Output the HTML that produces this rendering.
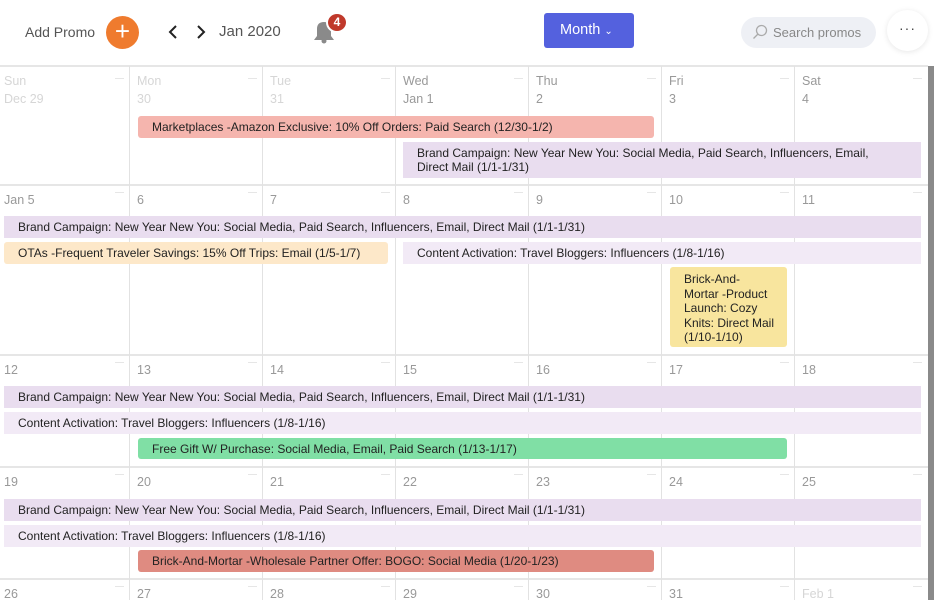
<!DOCTYPE html>
<html><head><meta charset="utf-8"><style>
*{box-sizing:border-box;margin:0;padding:0}
body{width:934px;height:600px;overflow:hidden;background:#fff;font-family:"Liberation Sans",sans-serif;position:relative;color:#222}
.a{position:absolute}
.vl{position:absolute;top:66px;bottom:0;width:1px;background:#e2e2e2}
.hl{position:absolute;left:0;width:928px;height:2px;background:#e6e6e6}
.d{position:absolute;font-size:12.5px;color:#999;line-height:18px}
.dim{color:#d6d6d6}
.dash{position:absolute;width:9px;height:1px;background:#e6e6e6}
.ev{position:absolute;font-size:12px;line-height:14px;color:#222;padding-left:14px;border-radius:3px;display:flex;align-items:center;white-space:nowrap}
</style></head><body>
<!-- header -->
<div class="a" style="left:25px;top:24px;font-size:14px;color:#555">Add Promo</div>
<div class="a" style="left:106px;top:16px;width:33px;height:33px;border-radius:50%;background:#ef7b2e;color:#fff;font-size:26px;line-height:31px;text-align:center;font-weight:300">+</div>
<svg class="a" style="left:166px;top:24px" width="44" height="16"><path d="M10 2 L4 8 L10 14" stroke="#222" stroke-width="2" fill="none"/><path d="M32 2 L38 8 L32 14" stroke="#222" stroke-width="2" fill="none"/></svg>
<div class="a" style="left:219px;top:23px;font-size:15px;color:#555">Jan 2020</div>
<svg class="a" style="left:311px;top:18px" width="26" height="26"><path d="M3 22 L6 18 L6 11 Q6 4 13 4 Q20 4 20 11 L20 18 L23 22 Z" fill="#8a8a8a"/><circle cx="13" cy="23" r="2.5" fill="#8a8a8a"/></svg>
<div class="a" style="left:326px;top:12px;width:22px;height:21px;border-radius:50%;background:#c0392b;border:2px solid #fff;color:#fff;font-size:12px;font-weight:bold;text-align:center;line-height:17px">4</div>
<div class="a" style="left:544px;top:13px;width:90px;height:35px;background:#5461de;border-radius:3px;color:#fff;font-size:14.5px;line-height:34px;padding-left:16px">Month <span style="font-size:10px">&#8964;</span></div>
<div class="a" style="left:741px;top:17px;width:135px;height:31px;background:#eef0f5;border-radius:16px;font-size:13px;color:#888;line-height:31px;padding-left:32px">Search promos</div>
<svg class="a" style="left:752px;top:24px" width="16" height="16"><circle cx="9.5" cy="6.5" r="5" stroke="#aaa" stroke-width="1.3" fill="none"/><path d="M6 10 L1.5 14.5" stroke="#aaa" stroke-width="1.3"/></svg>
<div class="a" style="left:887px;top:10px;width:41px;height:41px;border-radius:50%;background:#fff;box-shadow:0 1px 6px rgba(0,0,0,.1);text-align:center;font-size:14px;line-height:36px;color:#444;letter-spacing:1px">&middot;&middot;&middot;</div>
<!-- grid -->
<div class="hl" style="top:65px"></div>
<div class="hl" style="top:184px"></div>
<div class="hl" style="top:354px"></div>
<div class="hl" style="top:466px"></div>
<div class="hl" style="top:578px"></div>
<div class="vl" style="left:129px"></div><div class="vl" style="left:262px"></div><div class="vl" style="left:395px"></div><div class="vl" style="left:528px"></div><div class="vl" style="left:661px"></div><div class="vl" style="left:794px"></div>
<div class="a" style="left:928px;top:66px;width:6px;height:534px;background:#8a8a8a"></div>
<!-- row1 labels -->
<div class="d dim" style="left:4px;top:72px">Sun<br>Dec 29</div>
<div class="d dim" style="left:137px;top:72px">Mon<br>30</div>
<div class="d dim" style="left:270px;top:72px">Tue<br>31</div>
<div class="d" style="left:403px;top:72px">Wed<br>Jan 1</div>
<div class="d" style="left:536px;top:72px">Thu<br>2</div>
<div class="d" style="left:669px;top:72px">Fri<br>3</div>
<div class="d" style="left:802px;top:72px">Sat<br>4</div>
<!-- row2 -->
<div class="d" style="left:4px;top:191px">Jan 5</div><div class="d" style="left:137px;top:191px">6</div><div class="d" style="left:270px;top:191px">7</div><div class="d" style="left:403px;top:191px">8</div><div class="d" style="left:536px;top:191px">9</div><div class="d" style="left:669px;top:191px">10</div><div class="d" style="left:802px;top:191px">11</div>
<div class="d" style="left:4px;top:361px">12</div><div class="d" style="left:137px;top:361px">13</div><div class="d" style="left:270px;top:361px">14</div><div class="d" style="left:403px;top:361px">15</div><div class="d" style="left:536px;top:361px">16</div><div class="d" style="left:669px;top:361px">17</div><div class="d" style="left:802px;top:361px">18</div>
<div class="d" style="left:4px;top:473px">19</div><div class="d" style="left:137px;top:473px">20</div><div class="d" style="left:270px;top:473px">21</div><div class="d" style="left:403px;top:473px">22</div><div class="d" style="left:536px;top:473px">23</div><div class="d" style="left:669px;top:473px">24</div><div class="d" style="left:802px;top:473px">25</div>
<div class="d" style="left:4px;top:585px">26</div><div class="d" style="left:137px;top:585px">27</div><div class="d" style="left:270px;top:585px">28</div><div class="d" style="left:403px;top:585px">29</div><div class="d" style="left:536px;top:585px">30</div><div class="d" style="left:669px;top:585px">31</div><div class="d dim" style="left:802px;top:585px">Feb 1</div>
<!-- dashes -->
<div class="dash" style="left:115px;top:78px"></div><div class="dash" style="left:248px;top:78px"></div><div class="dash" style="left:381px;top:78px"></div><div class="dash" style="left:514px;top:78px"></div><div class="dash" style="left:647px;top:78px"></div><div class="dash" style="left:780px;top:78px"></div><div class="dash" style="left:913px;top:78px"></div>
<div class="dash" style="left:115px;top:192px"></div><div class="dash" style="left:248px;top:192px"></div><div class="dash" style="left:381px;top:192px"></div><div class="dash" style="left:514px;top:192px"></div><div class="dash" style="left:647px;top:192px"></div><div class="dash" style="left:780px;top:192px"></div><div class="dash" style="left:913px;top:192px"></div>
<div class="dash" style="left:115px;top:362px"></div><div class="dash" style="left:248px;top:362px"></div><div class="dash" style="left:381px;top:362px"></div><div class="dash" style="left:514px;top:362px"></div><div class="dash" style="left:647px;top:362px"></div><div class="dash" style="left:780px;top:362px"></div><div class="dash" style="left:913px;top:362px"></div>
<div class="dash" style="left:115px;top:474px"></div><div class="dash" style="left:248px;top:474px"></div><div class="dash" style="left:381px;top:474px"></div><div class="dash" style="left:514px;top:474px"></div><div class="dash" style="left:647px;top:474px"></div><div class="dash" style="left:780px;top:474px"></div><div class="dash" style="left:913px;top:474px"></div>
<div class="dash" style="left:115px;top:586px"></div><div class="dash" style="left:248px;top:586px"></div><div class="dash" style="left:381px;top:586px"></div><div class="dash" style="left:514px;top:586px"></div><div class="dash" style="left:647px;top:586px"></div><div class="dash" style="left:780px;top:586px"></div><div class="dash" style="left:913px;top:586px"></div>
<!-- events -->
<div class="ev" style="left:138px;top:116px;width:516px;height:22px;background:#f5b5ae">Marketplaces -Amazon Exclusive: 10% Off Orders: Paid Search (12/30-1/2)</div>
<div class="ev" style="left:403px;top:142px;width:518px;height:36px;background:#e9ddef;border-radius:0">Brand Campaign: New Year New You: Social Media, Paid Search, Influencers, Email,<br>Direct Mail (1/1-1/31)</div>
<div class="ev" style="left:4px;top:216px;width:917px;height:22px;background:#e9ddef;border-radius:0">Brand Campaign: New Year New You: Social Media, Paid Search, Influencers, Email, Direct Mail (1/1-1/31)</div>
<div class="ev" style="left:4px;top:242px;width:384px;height:22px;background:#fde8c9">OTAs -Frequent Traveler Savings: 15% Off Trips: Email (1/5-1/7)</div>
<div class="ev" style="left:403px;top:242px;width:518px;height:22px;background:#f2eaf6;border-radius:0">Content Activation: Travel Bloggers: Influencers (1/8-1/16)</div>
<div class="ev" style="left:670px;top:267px;width:117px;height:80px;background:#f8e59e;align-items:flex-start;padding-top:5px;line-height:14.5px">Brick-And-<br>Mortar -Product<br>Launch: Cozy<br>Knits: Direct Mail<br>(1/10-1/10)</div>
<div class="ev" style="left:4px;top:386px;width:917px;height:22px;background:#e9ddef;border-radius:0">Brand Campaign: New Year New You: Social Media, Paid Search, Influencers, Email, Direct Mail (1/1-1/31)</div>
<div class="ev" style="left:4px;top:412px;width:917px;height:22px;background:#f2eaf6;border-radius:0">Content Activation: Travel Bloggers: Influencers (1/8-1/16)</div>
<div class="ev" style="left:138px;top:438px;width:649px;height:21px;background:#80dfa5">Free Gift W/ Purchase: Social Media, Email, Paid Search (1/13-1/17)</div>
<div class="ev" style="left:4px;top:499px;width:917px;height:22px;background:#e9ddef;border-radius:0">Brand Campaign: New Year New You: Social Media, Paid Search, Influencers, Email, Direct Mail (1/1-1/31)</div>
<div class="ev" style="left:4px;top:525px;width:917px;height:22px;background:#f2eaf6;border-radius:0">Content Activation: Travel Bloggers: Influencers (1/8-1/16)</div>
<div class="ev" style="left:138px;top:550px;width:516px;height:22px;background:#df8b81">Brick-And-Mortar -Wholesale Partner Offer: BOGO: Social Media (1/20-1/23)</div>
</body></html>
